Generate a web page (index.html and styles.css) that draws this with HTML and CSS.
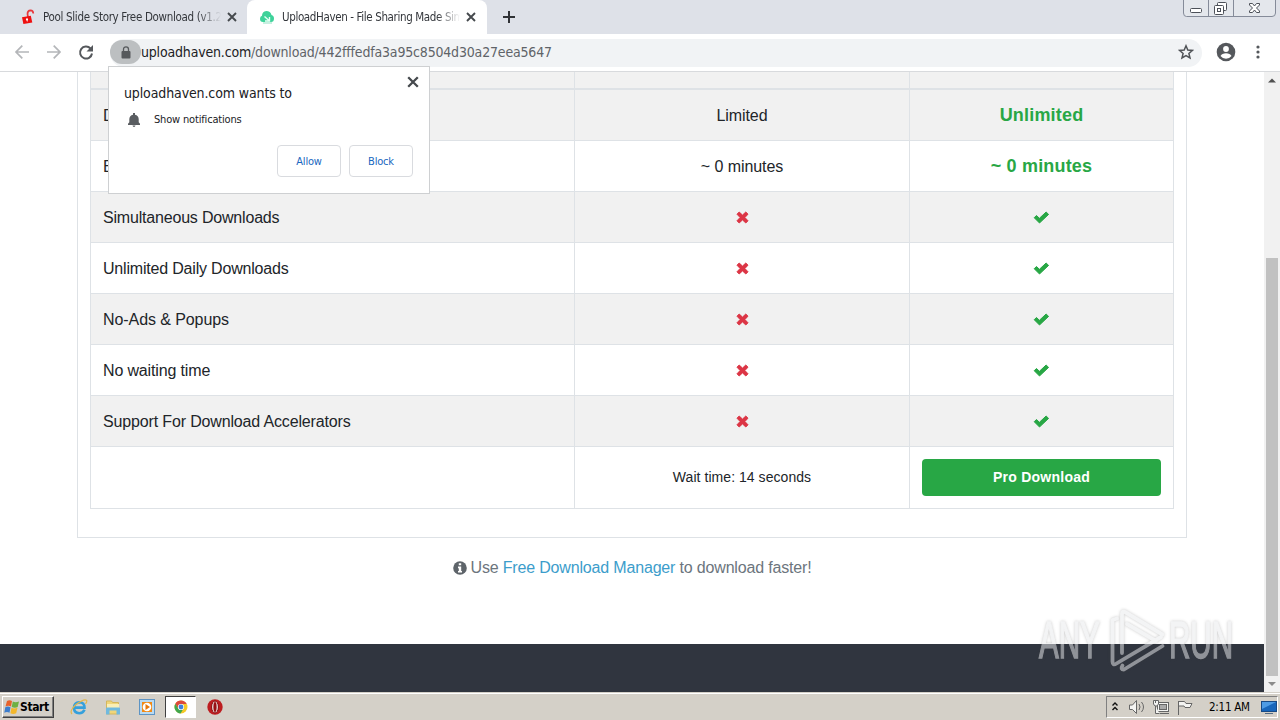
FILE: index.html
```html
<!DOCTYPE html>
<html lang="en">
<head>
<meta charset="utf-8">
<title>UploadHaven - File Sharing Made Simple</title>
<link rel="stylesheet" href="styles.css">
</head>
<body>
<svg width="0" height="0" class="defs">
  <symbol id="times" viewBox="0 0 13 13"><path d="M3.2 1 6.5 4.1 9.8 1 12 3.2 8.9 6.5 12 9.8 9.8 12 6.5 8.9 3.2 12 1 9.8 4.1 6.5 1 3.2z" fill="#dc3545" stroke="#dc3545" stroke-linejoin="round"/></symbol>
  <symbol id="check" viewBox="0 0 17 13"><path d="M1.2 6.7 3.5 4.5 6.4 7.3 13.1 1 15.6 3.4 6.5 12z" fill="#28a745" stroke="#28a745" stroke-linejoin="round"/></symbol>
  <symbol id="close" viewBox="0 0 10 10"><path d="M1 1 9 9M9 1 1 9" stroke="#45494d" stroke-width="1.9"/></symbol>
</svg>
<div class="screen">
  <header class="tabs">
    <div class="tab first">
      <svg class="fav" width="16" height="16" viewBox="0 0 16 16"><path d="M8 8 7.500 5Q7.500 1.500 10.500 1.400 13.200 1.500 13.300 4.500" fill="none" stroke="#e8383b" stroke-width="1.700"/><path d="M2 8.300 10.800 6.800 12.300 13.400 3.400 15z" fill="#ee1010"/><circle cx="7" cy="10.400" r="1.100" fill="#fff"/><path d="M7 10.500 7.300 12.500" stroke="#fff" stroke-width=".8"/></svg>
      <span class="title t1">Pool Slide Story Free Download (v1.2</span>
      <svg width="10" height="10"><use href="#close"/></svg>
    </div>
    <div class="tab active">
      <svg class="fav" width="16" height="16" viewBox="0 0 16 16"><path d="M4 13Q1 13 1 9.800 1 7.400 3 6.800 3 2.500 7.300 2 11.500 2 12.500 6 15 6.500 15 9.500 15 13 12 13z" fill="#3ed29a"/><path d="M5.500 7.500 10 11.500M10.500 8v4H6" fill="none" stroke="#e6fff5" stroke-width="1.400"/><path d="M4 14h9" stroke="#8fdfc2"/></svg>
      <span class="title t2">UploadHaven - File Sharing Made Sim</span>
      <svg width="10" height="10"><use href="#close"/></svg>
    </div>
    <svg class="plus" width="12" height="12"><path d="M6 0V12M0 6H12" stroke="#303236" stroke-width="2"/></svg>
    <svg class="winbtns" width="94" height="18" viewBox="0 0 94 18"><path d="M.5 0V13Q.5 16.500 3.500 16.500H89Q92.500 16.500 92.500 13V0M25.500 0V16M50.500 0V16" fill="#e4e7ec" stroke="#858b99"/><g fill="#fff" stroke="#4c5058"><rect x="7.500" y="8.500" width="11" height="4" rx="1"/><rect x="34.500" y="2.500" width="9" height="8" rx="1"/><rect x="31.500" y="5.500" width="9" height="9" rx="1"/><rect x="34.500" y="8.500" width="3" height="3"/><path d="M66.500 3.500h3l2 2.500 2-2.500h3v1.500l-3 3 3 3v1.500h-3l-2-2.500-2 2.500h-3v-1.500l3-3-3-3z"/></g></svg>
  </header>
  <nav class="toolbar">
    <svg class="navicons" width="84" height="18" viewBox="0 0 84 18"><g fill="none" stroke="#b4b6b9" stroke-width="1.700"><path d="M16 9H3M9.300 2.600 3 9l6.300 6.400M34 9h13M40.700 2.600 47 9l-6.300 6.400"/></g><path d="M77.500 5.500A6 6 0 1 0 79 10.500" fill="none" stroke="#55585c" stroke-width="2"/><path d="M80 2v6.500h-6.500z" fill="#55585c"/></svg>
    <div class="omni">
      <span class="lock"><svg width="10" height="13" viewBox="0 0 10 13"><rect x=".5" y="5" width="9" height="7.500" rx="1" fill="#56595c"/><path d="M2.500 6V3.300a2.500 2.500 0 0 1 5 0V6" fill="none" stroke="#56595c" stroke-width="1.300"/></svg></span>
      <span class="url"><b>uploadhaven.com</b><span class="path">/download/442fffedfa3a95c8504d30a27eea5647</span></span>
      <svg class="star" width="16" height="16" viewBox="0 0 16 16"><path d="M8 1.800 9.800 6l4.600.4-3.500 3 1.100 4.500-4-2.400-4 2.400 1.100-4.500-3.500-3L6.200 6z" fill="none" stroke="#505357" stroke-width="1.500"/></svg>
    </div>
    <svg width="20" height="20" viewBox="0 0 20 20"><circle cx="10" cy="10" r="9.300" fill="#55585c"/><circle cx="10" cy="7" r="2.900" fill="#fff"/><path d="M4.500 14Q6 11.300 10 11.300T15.500 14Q13.300 16.800 10 16.800T4.500 14" fill="#fff"/></svg>
    <svg class="dots" width="4" height="16"><g fill="#55585c"><circle cx="2" cy="3" r="1.600"/><circle cx="2" cy="8" r="1.600"/><circle cx="2" cy="13" r="1.600"/></g></svg>
  </nav>
  <main class="view">
    <div class="page">
      <section class="card">
        <div class="table">
          <div class="row head"><div></div><div></div><div></div></div>
          <div class="row odd"><div><span>D</span></div><div><span class="w-lim">Limited</span></div><div class="pro"><span class="w-unl">Unlimited</span></div></div>
          <div class="row"><div><span>E</span></div><div><span class="w-min">~ 0 minutes</span></div><div class="pro"><span class="w-pmin">~ 0 minutes</span></div></div>
          <div class="row odd"><div><span class="l1">Simultaneous Downloads</span></div><div><svg width="13" height="13"><use href="#times"/></svg></div><div><svg width="17" height="13"><use href="#check"/></svg></div></div>
          <div class="row"><div><span class="l2">Unlimited Daily Downloads</span></div><div><svg width="13" height="13"><use href="#times"/></svg></div><div><svg width="17" height="13"><use href="#check"/></svg></div></div>
          <div class="row odd"><div><span class="l3">No-Ads &amp; Popups</span></div><div><svg width="13" height="13"><use href="#times"/></svg></div><div><svg width="17" height="13"><use href="#check"/></svg></div></div>
          <div class="row"><div><span class="l4">No waiting time</span></div><div><svg width="13" height="13"><use href="#times"/></svg></div><div><svg width="17" height="13"><use href="#check"/></svg></div></div>
          <div class="row odd"><div><span class="l5">Support For Download Accelerators</span></div><div><svg width="13" height="13"><use href="#times"/></svg></div><div><svg width="17" height="13"><use href="#check"/></svg></div></div>
          <div class="row last"><div></div><div><span class="wait">Wait time: 14 seconds</span></div><div><button class="buy">Pro Download</button></div></div>
        </div>
      </section>
      <p class="tip"><svg width="14" height="14" viewBox="0 0 14 14"><circle cx="7" cy="7" r="6.800" fill="#5e646a"/><path d="M5.800 2.300h2.400v2H5.800zM5 5.600h3.200v4.300H9v1.600H5V9.900h.8V7.200H5z" fill="#fff"/></svg><span>Use <a>Free Download Manager</a> to download faster!</span></p>
      <footer class="foot"></footer>
    </div>
    <div class="scroll"><svg width="16" height="16"><path d="M4 10.500 8 6.500l4 4z" fill="#505050"/></svg><div class="thumb"></div><svg width="16" height="16"><path d="M4 6 8 10l4-4z" fill="#8b8b8b"/></svg></div>
  </main>
  <footer class="taskbar">
    <div class="start"><svg width="16" height="16" viewBox="0 0 16 16"><path d="M3 2Q5.500.5 8 2L7 7.500Q4.500 6 1.500 7.500z" fill="#e7622b"/><path d="M8.800 2.500q2.500 1.500 6.200 0L13.700 8Q11 9.500 7.700 8z" fill="#6fb043"/><path d="M1.300 8.300q2.500-1.500 5.200 0l-1 5.500q-2.500-1.500-5.200 0z" fill="#3c7dcd"/><path d="M7.500 8.800q2.500 1.500 6 0l-1.300 5.500q-3 1.500-5.800 0z" fill="#f3b72b"/></svg><b>Start</b></div>
    <div class="quick">
      <svg width="18" height="18" viewBox="0 0 18 18"><path d="M14.500 11.800Q13 15.200 9.300 15.200 4 15 4 9.800T9.300 4.200q5.200.2 5.200 5.400H5" fill="none" stroke="#35a0dc" stroke-width="2.600"/><path d="M2 16Q-1 13 6 6.500 14 .5 16.500 2.200 17.500 3 15.500 6" fill="none" stroke="#e3b74b" stroke-width="1.200"/></svg>
      <svg width="18" height="18" viewBox="0 0 18 18"><path d="M2.500 3h5l1 1.500h6V16h-12z" fill="#f0d67a" stroke="#d4b65c"/><path d="M3 6h12v4H3z" fill="#faeeb6"/><path d="M2 16.500v-6q0-1 1-1h12q1 0 1 1v6h-3.500v-4h-7v4z" fill="#70b9df"/></svg>
      <svg width="18" height="18" viewBox="0 0 18 18"><rect x="1.500" y="1.500" width="15" height="15" fill="#b9daf2" stroke="#5d94c4"/><rect x="4" y="4" width="10" height="10" fill="#f28a15"/><circle cx="9" cy="9" r="4.300" fill="#fff"/><path d="M7.500 6 12 9l-4.500 3z" fill="#e7780c"/></svg>
      <div class="pressed"><svg width="14" height="14" viewBox="0 0 14 14"><circle cx="7" cy="7" r="6.500" fill="#f6c927"/><path d="M1.300 3.800A6.500 6.500 0 0 1 12.700 4H7L4.200 8.600z" fill="#dc493c"/><path d="M1.300 3.800A6.500 6.500 0 0 0 6.500 13.500L9.500 8.800 7 10 4.200 8.600z" fill="#40a64e"/><circle cx="7" cy="7" r="3.100" fill="#fff"/><circle cx="7" cy="7" r="2.400" fill="#3e80dc"/></svg></div>
      <svg width="18" height="18" viewBox="0 0 18 18"><circle cx="9" cy="9" r="7.700" fill="#bd1d20"/><ellipse cx="9" cy="9" rx="3.400" ry="6" fill="#eee8e5" stroke="#86080b"/><ellipse cx="9" cy="9" rx="1.600" ry="5" fill="#980f13"/></svg>
    </div>
    <div class="tray">
      <svg width="88" height="18" viewBox="0 0 88 18"><g fill="none" stroke="#111" stroke-width="1.400"><path d="M5.500 7.500 8 5l2.500 2.500M5.500 12 8 9.500l2.500 2.500"/></g><g fill="#f4f4f2" stroke="#666"><path d="M22.500 7h3l4-4.500v13l-4-4h-3z"/><path d="M32 6q2 3 0 6M34.500 4q4 5 0 10" fill="none"/><rect x="50.500" y="4.500" width="11" height="9"/><rect x="52.500" y="6.500" width="7" height="5" fill="#aaa"/><path d="M53 15.500h9M48.500 8v7.500h4"/><path d="M46.500 2.500h5V6L50 8h-2l-1.500-2zM48.500 2v3"/><path d="M71.500 17V3M71.500 3.500h6l1.500 2h6l-2 4h-5l-1-1.500h-5.500z"/></g></svg>
      <span class="clock">2:11 AM</span>
      <svg width="16" height="16" viewBox="0 0 16 16"><rect x=".5" y="2.500" width="15" height="10" fill="#1766bb" stroke="#174a85"/><path d="M1 3h14L1 10z" fill="#4d9be4"/><path d="M4 14.500h8" stroke="#536b83"/></svg>
    </div>
  </footer>
  <div class="popup">
    <svg class="x" width="12" height="12" viewBox="0 0 10 10"><use href="#close"/></svg>
    <div class="ask">uploadhaven.com wants to</div>
    <div class="perm"><svg width="14" height="16" viewBox="0 0 14 16"><path d="M1 14v-1.300l1.300-1.500V8Q2.500 4.500 6 3.700V2h2v1.700q3.500.8 3.700 4.300v3.200l1.300 1.500V14zM5.500 14.600h3Q8.300 16 7 16t-1.500-1.400" fill="#5a5d61"/></svg><span>Show notifications</span></div>
    <div class="btns"><button><span class="b1">Allow</span></button><button><span class="b2">Block</span></button></div>
  </div>
  <div class="mark">
    <span class="m1">ANY</span>
    <svg width="56" height="64" viewBox="10 4 56 64"><path d="M22 49V9.500Q22 6.500 25 8L62.500 30.500M17 14.500 12.500 16V57.500Q12.500 62 16.500 59.500L61 33M27 20 56 37M22.500 61.500Q20 65.500 24 65.500L62.500 42" fill="none" stroke="currentColor" stroke-width="3.800" stroke-linejoin="round" stroke-linecap="round"/></svg>
    <span class="m2">RUN</span>
  </div>
</div>
</body>
</html>
```
FILE: styles.css
```css
* { box-sizing: border-box; }
body { margin: 0; font-family: "Liberation Sans", Arial, sans-serif; color: #212529; }
svg { display: block; flex: none; }
.defs { position: absolute; }
button { font: inherit; padding: 0; }
.screen { position: relative; width: 1280px; height: 720px; overflow: hidden; display: flex; flex-direction: column; background: #fff; white-space: nowrap; }
.tabs, .toolbar, .popup, .taskbar { font-family: "DejaVu Sans Condensed", "DejaVu Sans", sans-serif; font-stretch: condensed; }

.tabs { height: 34px; flex: none; background: #dee1e8; display: flex; align-items: flex-start; }
.tab { height: 34px; display: flex; align-items: center; font-size: 11.5px; color: #33363b; }
.first { width: 247px; padding-left: 20px; }
.active { width: 240px; padding-left: 12px; background: #fff; border-radius: 8px 8px 0 0; }
.fav { margin-right: 7px; }
.title { width: 178px; overflow: hidden; margin-right: 6px; -webkit-mask-image: linear-gradient(90deg, #000 155px, transparent 178px); mask-image: linear-gradient(90deg, #000 155px, transparent 178px); }
.t1 { letter-spacing: -.32px; }
.t2 { letter-spacing: -.37px; }
.plus { margin: 11px 0 0 16px; }
.winbtns { margin-left: auto; margin-right: 3px; }

.toolbar { height: 38px; flex: none; display: flex; align-items: center; padding: 0 19px 0 13px; border-bottom: 1px solid #d8dadd; }
.navicons { margin-right: 13px; }
.toolbar > svg { position: relative; top: -1px; }
.omni { width: 1092px; height: 28px; border-radius: 14px; background: #f1f3f5; display: flex; align-items: center; padding-right: 8px; margin-right: 14px; }
.lock { width: 31px; height: 24px; border-radius: 12px; background: #bcbfc1; display: flex; align-items: center; justify-content: center; margin-bottom: 1px; }
.url { font-size: 14px; color: #5f6368; letter-spacing: -.18px; padding-bottom: 2px; }
.url b { font-weight: 400; color: #202124; }
.star { margin-left: auto; margin-bottom: 2px; }
.dots { margin-left: 20px; }

.view { height: 620px; flex: none; display: flex; }
.page { width: 1264px; display: flex; flex-direction: column; }
.card { width: 1110px; height: 466px; margin-left: 77px; padding: 0 12px; border: 1px solid #dee2e6; border-top: 0; }
.table { width: 1084px; border-right: 1px solid #dee2e6; }
.row { height: 51px; display: grid; grid-template-columns: 484px 335px 264px; font-size: 16px; }
.row > div { border-left: 1px solid #dee2e6; border-bottom: 1px solid #dee2e6; display: flex; align-items: center; justify-content: center; }
.row > div:first-child { justify-content: flex-start; padding-left: 12px; }
.row span { padding-top: 2px; }
.odd { background: #f1f1f1; }
.head { height: 18px; background: #f1f1f1; }
.head > div { border-bottom-width: 2px; }
.last { height: 62px; }
.row .pro { color: #28a745; font-weight: 700; font-size: 18px; }
.row .pro span { padding-top: 0; letter-spacing: .18px; }
.l1, .l2 { letter-spacing: -.19px; }
.l3 { letter-spacing: -.08px; }
.l4, .l5 { letter-spacing: -.15px; }
.w-min, .w-lim { letter-spacing: -.08px; }
.row .wait { font-size: 14px; letter-spacing: .05px; padding-top: 0; padding-bottom: 1px; }
.buy { width: 239px; height: 37px; border: 0; border-radius: 4px; background: #28a745; color: #fff; font-size: 14px; font-weight: 700; letter-spacing: .26px; padding-bottom: 1px; }
.tip { margin: 20px 0 0; height: 20px; display: flex; align-items: center; justify-content: center; gap: 4px; font-size: 16px; letter-spacing: -.17px; color: #6c757d; }
.tip a { color: #3c9dcb; }
.foot { margin-top: auto; height: 48px; background: #30353f; }
.scroll { width: 16px; background: #f1f1f1; display: flex; flex-direction: column; align-items: center; }
.thumb { width: 12px; height: 418px; margin-top: auto; background: #c1c1c1; }

.taskbar { height: 28px; background: #d4d0c8; border-top: 1px solid #d4d0c8; box-shadow: inset 0 1px #fff; display: flex; align-items: center; padding: 1px 2px 0; }
.start { width: 52px; height: 22px; border: 1px solid; border-color: #fff #404040 #404040 #fff; box-shadow: inset -1px -1px #808080; display: flex; align-items: center; padding-left: 1px; font-size: 12px; color: #000; }
.start b { letter-spacing: -.4px; }
.quick { display: flex; align-items: center; gap: 16px; margin-left: 16px; }
.pressed { width: 31px; height: 22px; margin: 0 -6px 0 -7px; background: #fff; border: 1px solid; border-color: #404040 #fff #fff #404040; display: flex; align-items: center; justify-content: center; }
.tray { margin-left: auto; width: 172px; height: 22px; border: 1px solid; border-color: #808080 #fff #fff #808080; display: flex; align-items: center; }
.clock { width: 50px; margin: 0 2px 0 14px; font-size: 11.5px; letter-spacing: -.25px; color: #000; }

.popup { position: absolute; left: 108px; top: 66px; width: 322px; height: 128px; background: #fff; border: 1px solid #ced0d2; padding: 16px 16px 0 15px; color: #202124; }
.x { position: absolute; right: 10px; top: 9px; }
.ask { height: 20px; line-height: 20px; font-size: 14px; letter-spacing: -.12px; }
.perm { height: 16px; margin-top: 8px; padding-left: 3px; display: flex; align-items: center; gap: 13px; font-size: 11px; letter-spacing: -.17px; }
.btns { display: flex; justify-content: flex-end; gap: 8px; margin-top: 18px; }
.btns button { width: 64px; height: 32px; background: #fff; border: 1px solid #d9dbdf; border-radius: 4px; color: #1a67c0; font-size: 11px; letter-spacing: -.2px; }

.mark { position: absolute; left: 1039px; top: 608px; width: 200px; height: 64px; display: flex; color: #e9eaec; opacity: .52; filter: drop-shadow(0 0 1.5px rgba(60,60,60,.5)); }
.mark span { display: block; width: 66px; height: 64px; font: 51px/66px "Liberation Sans", sans-serif; -webkit-text-stroke: 1.5px currentColor; transform-origin: 0 50%; }
.mark svg { margin-left: 5px; margin-right: 3px; }
.m1, .m2 { transform: scaleX(.58); }
```
